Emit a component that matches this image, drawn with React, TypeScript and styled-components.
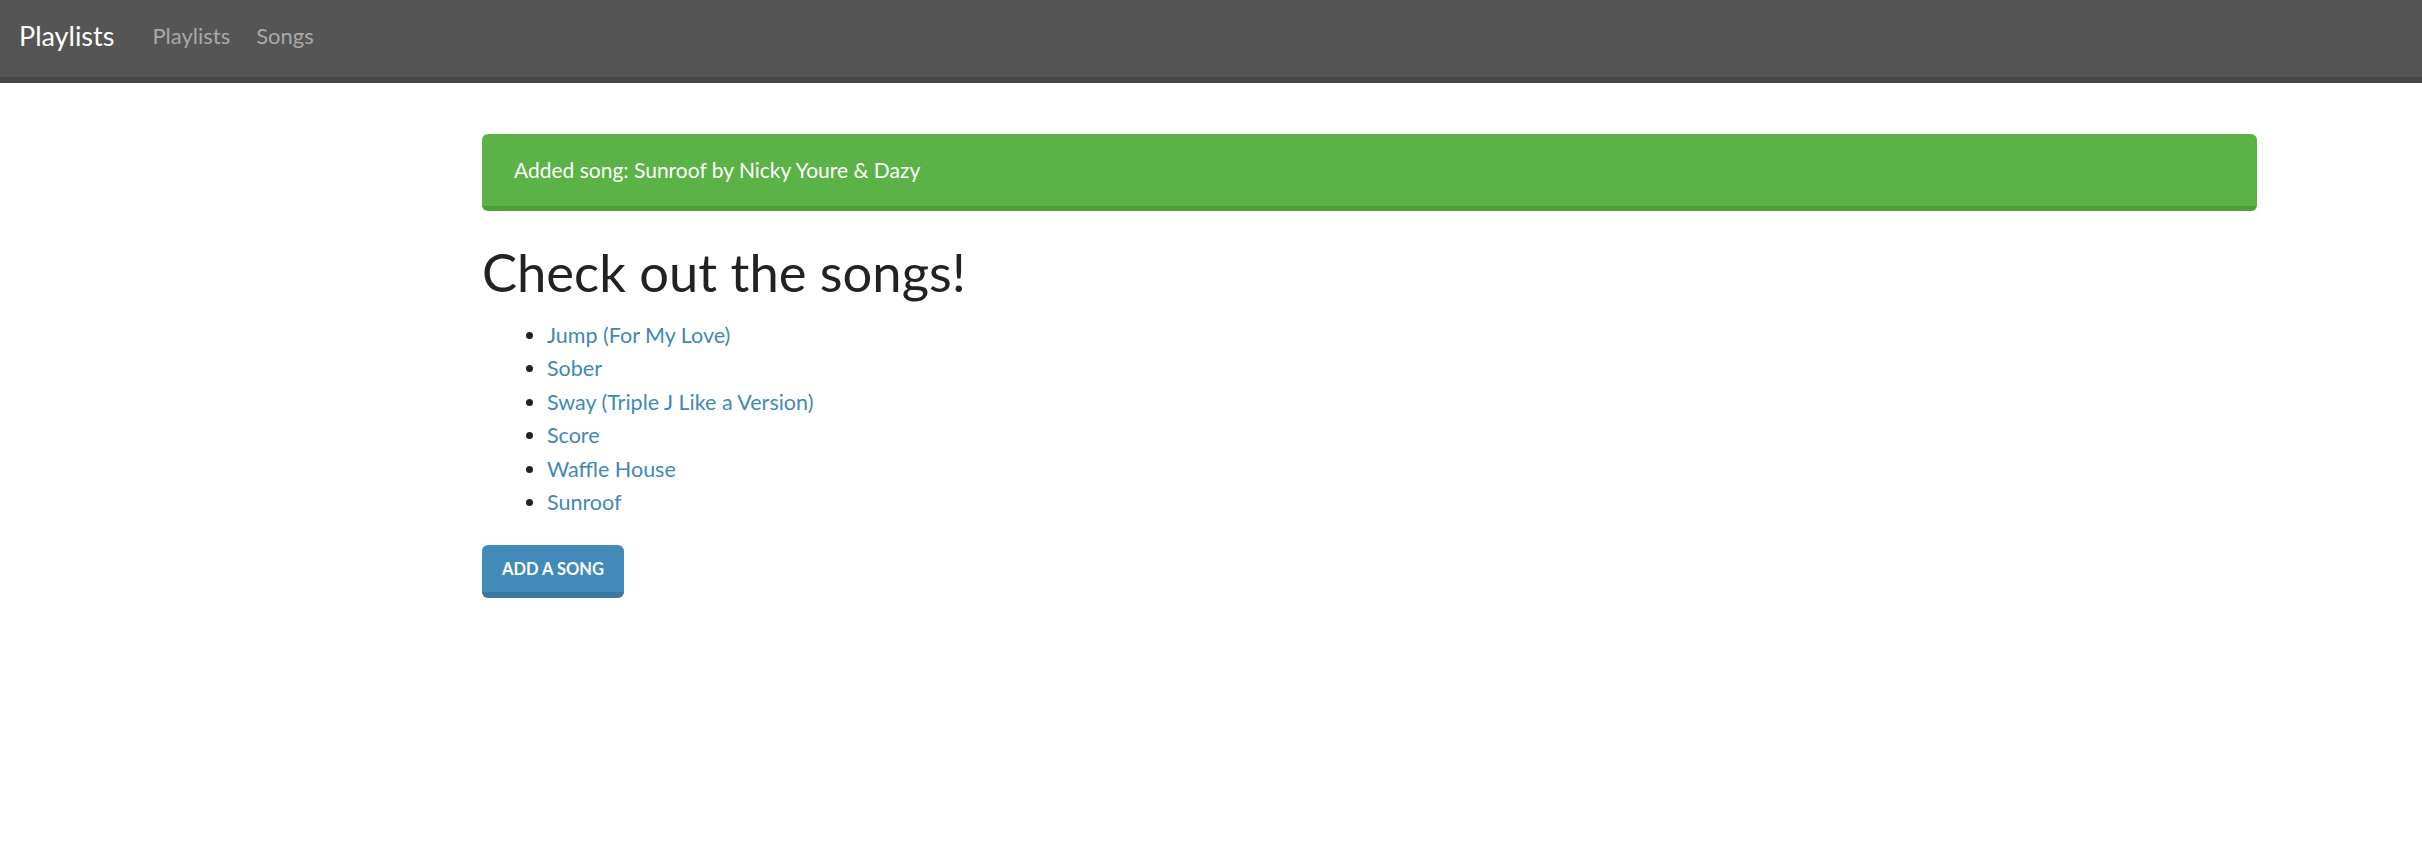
import React from "react";
import styled, { createGlobalStyle } from "styled-components";

const Global = createGlobalStyle`
  html, body { margin: 0; padding: 0; background: #ffffff; }
  body {
    font-family: Lato, "Noto Sans", "Liberation Sans", sans-serif;
    color: #222222;
  }
  * { box-sizing: border-box; }
`;

const Navbar = styled.header`
  display: flex;
  align-items: center;
  height: 83px;
  padding: 0 0 6px 19px;
  background: #555555;
  border-bottom: 6px solid #474747;
`;

const Brand = styled.a`
  font-size: 27px;
  color: #ffffff;
  text-decoration: none;
  margin-right: 38px;
`;

const NavLinks = styled.nav`
  display: flex;
  gap: 26px;
`;

const NavLink = styled.a`
  font-size: 22px;
  color: #a9a9a9;
  text-decoration: none;
`;

const Main = styled.main`
  padding: 51px 165px 0 482px;
`;

const Alert = styled.div`
  height: 77px;
  display: flex;
  align-items: center;
  padding: 0 32px 1px;
  background: #5bb247;
  border-bottom: 5px solid #4d9d3b;
  border-radius: 6px;
  color: #ffffff;
  font-size: 21px;
`;

const Heading = styled.h1`
  margin: 32px 0 18px;
  font-size: 52.5px;
  font-weight: 400;
  line-height: 1.1;
  color: #222222;
`;

const SongList = styled.ul`
  margin: 0 0 25.5px;
  padding-left: 65px;
  font-size: 21.5px;
  line-height: 33.5px;
`;

const SongItem = styled.li``;

const SongLink = styled.a`
  color: #3f88b5;
  text-decoration: none;
`;

const Button = styled.button`
  display: block;
  height: 53px;
  padding: 0 20px;
  background: #428ab7;
  border: none;
  border-bottom: 6px solid #3a77a1;
  border-radius: 6px;
  color: #ffffff;
  font-family: Lato, "Noto Sans", sans-serif;
  font-weight: 700;
  font-size: 16.5px;
  text-transform: uppercase;
  cursor: pointer;
`;

const songs = [
  "Jump (For My Love)",
  "Sober",
  "Sway (Triple J Like a Version)",
  "Score",
  "Waffle House",
  "Sunroof",
];

export default function App() {
  return (
    <>
      <Global />
      <Navbar>
        <Brand href="#">Playlists</Brand>
        <NavLinks>
          <NavLink href="#">Playlists</NavLink>
          <NavLink href="#">Songs</NavLink>
        </NavLinks>
      </Navbar>
      <Main>
        <Alert>Added song: Sunroof by Nicky Youre &amp; Dazy</Alert>
        <Heading>Check out the songs!</Heading>
        <SongList>
          {songs.map((s) => (
            <SongItem key={s}>
              <SongLink href="#">{s}</SongLink>
            </SongItem>
          ))}
        </SongList>
        <Button>Add a song</Button>
      </Main>
    </>
  );
}
